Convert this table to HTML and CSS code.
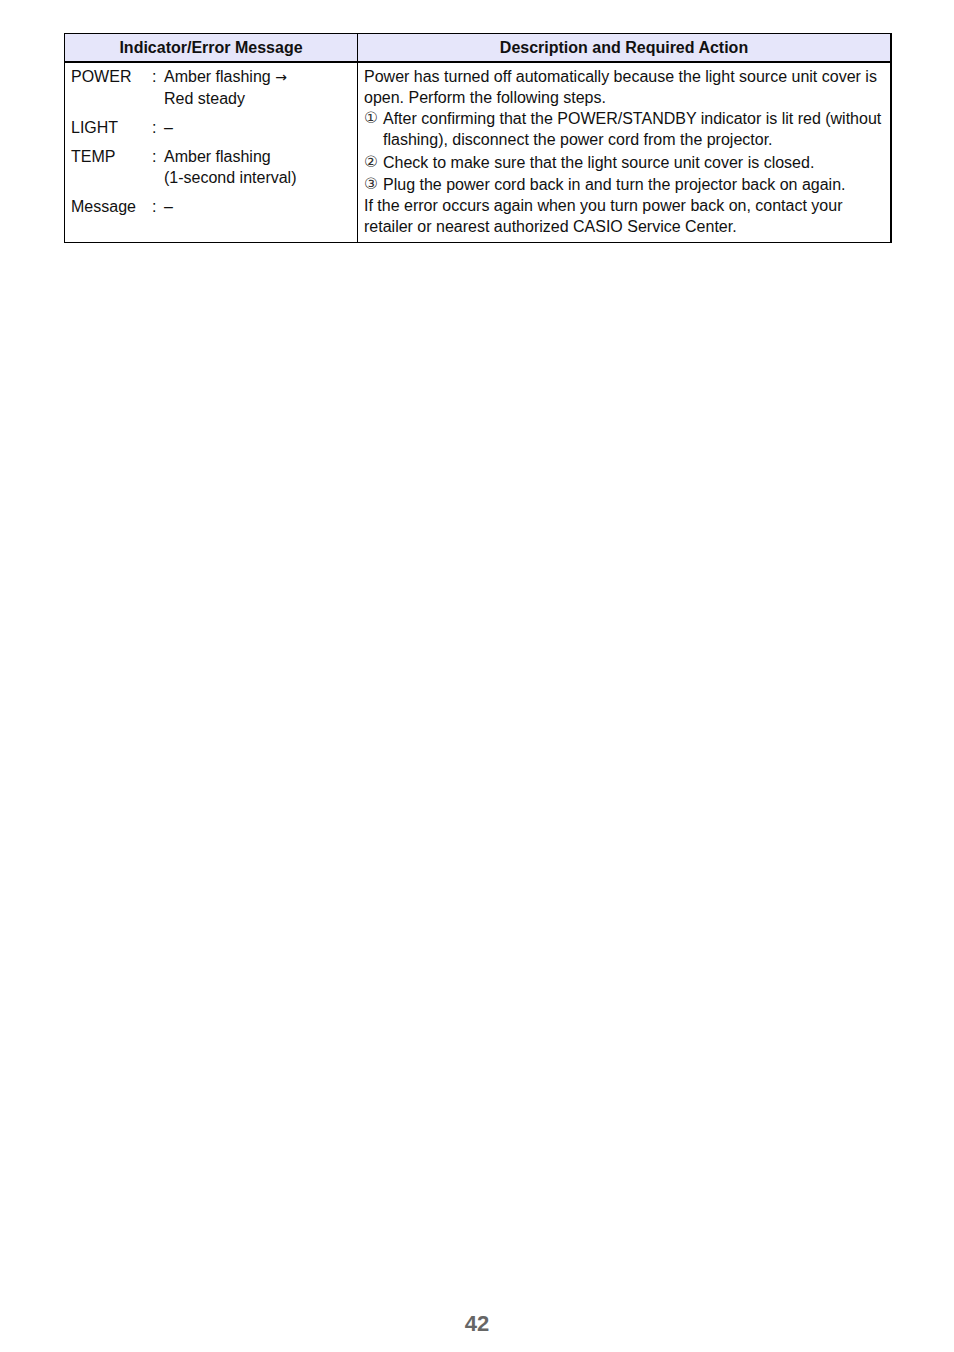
FILE: index.html
```html
<!DOCTYPE html>
<html>
<head>
<meta charset="utf-8">
<link rel="stylesheet" href="styles.css">
</head>
<body>
<div class="page">
  <table class="err">
    <thead>
      <tr>
        <th class="c1">Indicator/Error Message</th>
        <th class="c2">Description and Required Action</th>
      </tr>
    </thead>
    <tbody>
      <tr>
        <td class="c1">
          <div class="ind">
            <span class="lbl">POWER</span><span class="col">:</span><span class="val">Amber flashing <span class="arrow">→</span><br>Red steady</span>
            <span class="lbl">LIGHT</span><span class="col">:</span><span class="val">–</span>
            <span class="lbl">TEMP</span><span class="col">:</span><span class="val">Amber flashing<br>(1-second interval)</span>
            <span class="lbl">Message</span><span class="col">:</span><span class="val">–</span>
          </div>
        </td>
        <td class="c2">
          <p class="txt">Power has turned off automatically because the light source unit cover is open. Perform the following steps.</p>
          <p class="step s1"><span class="num">①</span><span>After confirming that the POWER/STANDBY indicator is lit red (without flashing), disconnect the power cord from the projector.</span></p>
          <p class="step s2"><span class="num">②</span><span>Check to make sure that the light source unit cover is closed.</span></p>
          <p class="step s3"><span class="num">③</span><span>Plug the power cord back in and turn the projector back on again.</span></p>
          <p class="txt">If the error occurs again when you turn power back on, contact your retailer or nearest authorized CASIO Service Center.</p>
        </td>
      </tr>
    </tbody>
  </table>
  <div class="pageno">42</div>
</div>
</body>
</html>
```

FILE: styles.css
```css
html, body {
  margin: 0;
  padding: 0;
  background: #fff;
}
body {
  font-family: "Liberation Sans", Arial, sans-serif;
  color: #111;
}
.page {
  width: 954px;
  height: 1352px;
  position: relative;
  padding-top: 33px;
  box-sizing: border-box;
}
.err {
  margin-left: 64px;
  width: 828px;
  border-collapse: collapse;
  table-layout: fixed;
  font-size: 16px;
}
.err th {
  background: #e6e6fa;
  font-weight: bold;
  font-size: 16px;
  height: 27px;
  padding: 0;
  text-align: center;
  border: 1px solid #000;
  border-bottom: 2px solid #000;
  line-height: 27px;
}
.err th.c2, .err td.c2 {
  border-right: 2px solid #000;
}
.err th.c1, .err td.c1 {
  width: 292px;
}
.err td {
  border: 1px solid #000;
  vertical-align: top;
  padding: 3px 6px 5px 6px;
  line-height: 21px;
}
.ind {
  display: grid;
  grid-template-columns: 81px 12px 1fr;
  row-gap: 8px;
}
.lbl, .col, .val {
  display: block;
}
.arrow {
  font-family: "DejaVu Sans", sans-serif;
  font-size: 14px;
}
.txt {
  margin: 0;
}
.step {
  margin: 0;
  display: flex;
}
.step.s2 {
  margin-top: 2px;
}
.step.s3 {
  margin-top: 1px;
}
.step .num {
  width: 19px;
  flex: none;
  font-family: "DejaVu Sans", sans-serif;
  font-size: 15.5px;
  color: #333;
}
.pageno {
  position: absolute;
  top: 1311px;
  left: 0;
  right: 0;
  text-align: center;
  font-weight: bold;
  font-size: 22px;
  color: #666;
}
```
